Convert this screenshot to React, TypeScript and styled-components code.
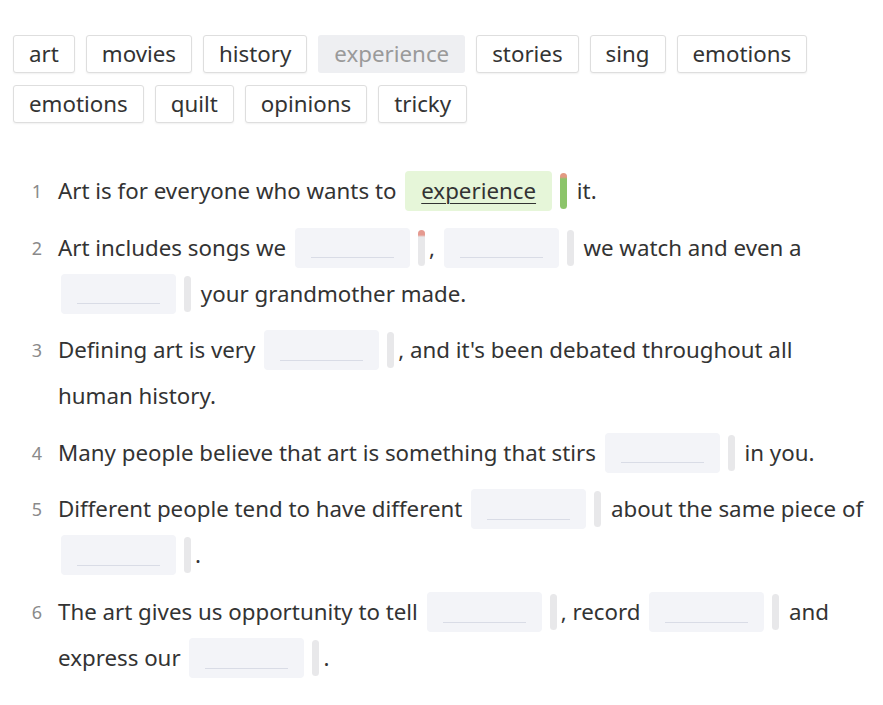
import styled, { createGlobalStyle } from "styled-components";

type Part = string | { blank: true; answer?: string; mark?: "done" | "started" };

const words = [
    { text: "art" },
    { text: "movies" },
    { text: "history" },
    { text: "experience", used: true },
    { text: "stories" },
    { text: "sing" },
    { text: "emotions" },
    { text: "emotions" },
    { text: "quilt" },
    { text: "opinions" },
    { text: "tricky" },
];

const B = (answer?: string, mark?: "done" | "started"): Part => ({ blank: true, answer, mark });

const sentences: Part[][] = [
    ["Art is for everyone who wants to ", B("experience", "done"), " it."],
    ["Art includes songs we ", B(undefined, "started"), ", ", B(), " we watch and even a ", B(), " your grandmother made."],
    ["Defining art is very ", B(), ", and it's been debated throughout all human history."],
    ["Many people believe that art is something that stirs ", B(), " in you."],
    ["Different people tend to have different ", B(), " about the same piece of ", B(), "."],
    ["The art gives us opportunity to tell ", B(), ", record ", B(), " and express our ", B(), "."],
];

const App = () => {
    return (
        <>
            <GlobalStyle />
            <Page>
                <WordBank>
                    {words.map((w, i) => (
                        <Chip key={i} used={!!w.used}>
                            {w.text}
                        </Chip>
                    ))}
                </WordBank>
                <List>
                    {sentences.map((parts, i) => (
                        <Item key={i}>
                            <Num>{i + 1}</Num>
                            <Sentence>
                                {parts.map((p, j) =>
                                    typeof p === "string" ? (
                                        <span key={j}>{p}</span>
                                    ) : (
                                        <Gap key={j}>
                                            <Blank filled={!!p.answer}>
                                                {p.answer ? <Answer>{p.answer}</Answer> : <Line />}
                                            </Blank>
                                            <Meter mark={p.mark} />
                                        </Gap>
                                    )
                                )}
                            </Sentence>
                        </Item>
                    ))}
                </List>
            </Page>
        </>
    );
};

export default App;

const GlobalStyle = createGlobalStyle`
    body {
        margin: 0;
        background: #ffffff;
        font-family: "Noto Sans", "Open Sans", sans-serif;
        color: #333333;
    }
`;

const Page = styled.div`
    padding: 35px 16px 0 13px;
    width: 883px;
    box-sizing: border-box;
`;

const WordBank = styled.div`
    display: flex;
    flex-wrap: wrap;
    gap: 12px 11px;
`;

const Chip = styled.div<{ used: boolean }>`
    height: 38px;
    box-sizing: border-box;
    padding: 0 15px 2px;
    display: flex;
    align-items: center;
    font-size: 22.3px;
    border-radius: 3px;
    border: 1px solid ${(p) => (p.used ? "transparent" : "#dedede")};
    background: ${(p) => (p.used ? "#eeeff2" : "#ffffff")};
    color: ${(p) => (p.used ? "#9a9a9a" : "#333333")};
    box-shadow: ${(p) => (p.used ? "none" : "0 1px 2px rgba(0,0,0,0.06)")};
`;

const List = styled.div`
    margin-top: 45px;
    display: flex;
    flex-direction: column;
    gap: 10.6px;
`;

const Item = styled.div`
    display: flex;
    align-items: flex-start;
`;

const Num = styled.div`
    width: 29px;
    padding-right: 16px;
    text-align: right;
    font-size: 18px;
    line-height: 46px;
    color: #8a8a8a;
    flex-shrink: 0;
`;

const Sentence = styled.div`
    flex: 1;
    font-size: 22.3px;
    line-height: 46px;
`;

const Gap = styled.span`
    white-space: nowrap;
`;

const Blank = styled.span<{ filled: boolean }>`
    display: inline-flex;
    align-items: center;
    justify-content: center;
    vertical-align: middle;
    box-sizing: border-box;
    height: 40px;
    min-width: 115px;
    padding: 0 16px;
    margin: 0 4px 0 3px;
    border-radius: 4px;
    background: ${(p) => (p.filled ? "#e6f6d9" : "#f3f4f8")};
    position: relative;
    top: -2px;
`;

const Line = styled.span`
    display: block;
    width: 83px;
    height: 1px;
    margin-top: 20px;
    background: #d9dce6;
`;

const Answer = styled.span`
    text-decoration: underline;
    text-underline-offset: 4px;
    text-decoration-thickness: 1px;
    line-height: 40px;
`;

const Meter = styled.span<{ mark?: "done" | "started" }>`
    display: inline-block;
    vertical-align: middle;
    width: 7px;
    height: 36px;
    margin: 0 4px 0 4px;
    border-radius: 4px;
    position: relative;
    top: -2px;
    background: ${(p) =>
        p.mark === "done"
            ? "linear-gradient(#e39a82 0, #e39a82 4px, #8cc46a 6px)"
            : p.mark === "started"
            ? "linear-gradient(#e59a90 0, #e59a90 5px, #e8e8ea 7px)"
            : "#e8e8ea"};
`;
